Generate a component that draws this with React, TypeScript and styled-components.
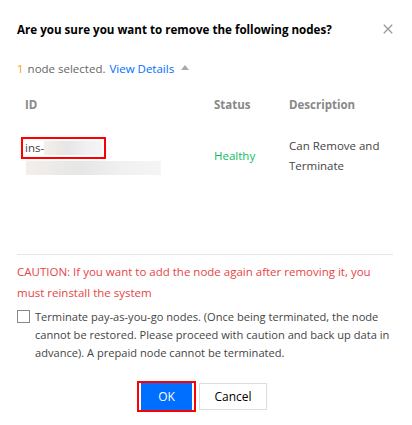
import React from "react";
import styled, { createGlobalStyle } from "styled-components";

const Global = createGlobalStyle`
  html, body { margin: 0; padding: 0; background: #fff; }
  body { font-family: "Open Sans", "Liberation Sans", sans-serif; font-size: 11.5px; color: #444; }
  * { box-sizing: border-box; }
`;

const Dialog = styled.div`
  width: 412px;
  height: 425px;
  padding: 0 19px 0 17px;
  display: flex;
  flex-direction: column;
`;

const Header = styled.div`
  display: flex;
  align-items: center;
  justify-content: space-between;
  height: 20px;
  margin-top: 19px;
`;

const Title = styled.h2`
  margin: 0;
  font-size: 11.6px;
  font-weight: 700;
  color: #000;
`;

const Close = styled.button`
  border: 0;
  background: none;
  padding: 0;
  width: 10px;
  height: 10px;
  margin-right: 0;
  display: flex;
  cursor: pointer;
`;

const Summary = styled.div`
  margin-top: 19px;
  height: 20px;
  display: flex;
  align-items: center;
  color: #666;
`;

const Count = styled.span`
  color: #ff9d00;
  margin-right: 4px;
`;

const Link = styled.a`
  color: #006eff;
  margin-left: 4px;
  text-decoration: none;
`;

const Caret = styled.span`
  display: inline-block;
  width: 0;
  height: 0;
  border-left: 4px solid transparent;
  border-right: 4px solid transparent;
  border-bottom: 5px solid #aaa;
  margin-left: 7px;
  margin-top: -1px;
`;

const TableWrap = styled.div`
  height: 166px;
  margin-top: 10px;
`;

const Table = styled.div`
  display: grid;
  grid-template-columns: 189px 75px 1fr;
`;

const HeadCell = styled.div`
  height: 32px;
  display: flex;
  align-items: center;
  padding-left: 8px;
  font-weight: 700;
  color: #888;
`;

const Cell = styled.div`
  height: 58px;
  margin-top: 7px;
  display: flex;
  flex-direction: column;
  justify-content: center;
  padding-left: 8px;
  line-height: 20px;
`;

const IdBox = styled.div`
  display: flex;
  align-items: center;
  width: 85px;
  height: 22px;
  margin-left: -4px;
  padding-left: 2px;
  border: 2px solid #f00;
`;

const Blur = styled.span<{ $w: number; $h: number }>`
  display: block;
  width: ${(p) => p.$w}px;
  height: ${(p) => p.$h}px;
  background: linear-gradient(90deg, #f3efea 0%, #e6e6e6 40%, #f0f0f0 70%, #f5f5f5 100%);
`;

const SubBlur = styled(Blur)`
  margin-top: 2px;
  margin-left: 1px;
`;

const Healthy = styled(Cell)`
  color: #0abf5b;
`;

const Divider = styled.div`
  height: 1px;
  flex: none;
  background: #e5e5e5;
`;

const Caution = styled.p`
  margin: 6px 0 0;
  color: #e54545;
  line-height: 21px;
`;

const CheckRow = styled.label`
  display: flex;
  align-items: flex-start;
  gap: 5px;
  margin-top: 5px;
  line-height: 18px;
  color: #444;
`;

const CheckText = styled.span`
  font-size: 11.1px;
`;

const Box = styled.span`
  flex: none;
  width: 13px;
  height: 13px;
  border: 1px solid #888;
  margin-top: 2px;
  background: #fff;
`;

const Footer = styled.div`
  display: flex;
  justify-content: center;
  gap: 7px;
  margin-top: 21px;
  padding-right: 2px;
`;

const Highlight = styled.div`
  border: 2px solid #f00;
  padding: 0 2px;
  margin: -2px -4px;
  display: flex;
`;

const Button = styled.button<{ $primary?: boolean }>`
  height: 27px;
  width: ${(p) => (p.$primary ? 51 : 68)}px;
  padding: 0;
  font-family: inherit;
  font-size: 12px;
  border: 1px solid ${(p) => (p.$primary ? "#006eff" : "#ddd")};
  background: ${(p) => (p.$primary ? "#006eff" : "#fff")};
  color: ${(p) => (p.$primary ? "#fff" : "#000")};
  cursor: pointer;
`;

export default function App() {
  return (
    <>
      <Global />
      <Dialog>
        <Header>
          <Title>Are you sure you want to remove the following nodes?</Title>
          <Close aria-label="Close">
            <svg width="10" height="10" viewBox="0 0 10 10">
              <path d="M0.8 0.8 L9.2 9.2 M9.2 0.8 L0.8 9.2" stroke="#999" strokeWidth="1.3" />
            </svg>
          </Close>
        </Header>
        <Summary>
          <Count>1</Count>node selected.<Link href="#">View Details</Link>
          <Caret />
        </Summary>
        <TableWrap>
          <Table>
            <HeadCell>ID</HeadCell>
            <HeadCell>Status</HeadCell>
            <HeadCell>Description</HeadCell>
            <Cell>
              <IdBox>
                ins-<Blur $w={58} $h={14} />
              </IdBox>
              <SubBlur $w={135} $h={14} />
            </Cell>
            <Healthy>Healthy</Healthy>
            <Cell>
              <span>Can Remove and</span>
              <span>Terminate</span>
            </Cell>
          </Table>
        </TableWrap>
        <Divider />
        <Caution>
          CAUTION: If you want to add the node again after removing it, you must reinstall the system
        </Caution>
        <CheckRow>
          <Box />
          <CheckText>
            Terminate pay-as-you-go nodes. (Once being terminated, the node cannot be restored. Please
            proceed with caution and back up data in advance). A prepaid node cannot be terminated.
          </CheckText>
        </CheckRow>
        <Footer>
          <Highlight>
            <Button $primary>OK</Button>
          </Highlight>
          <Button>Cancel</Button>
        </Footer>
      </Dialog>
    </>
  );
}
